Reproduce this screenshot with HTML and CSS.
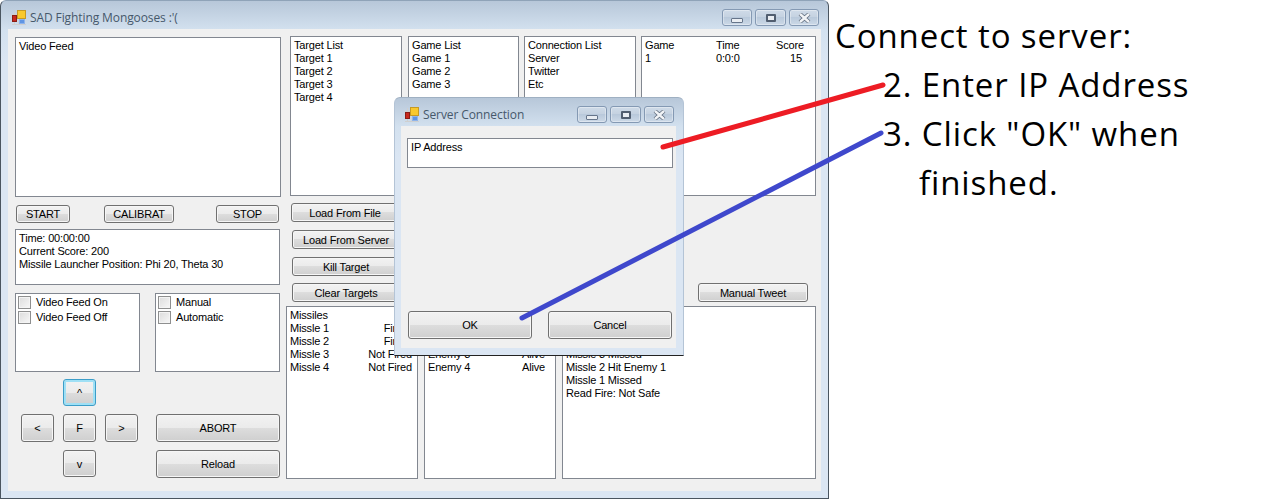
FILE: index.html
```html
<!DOCTYPE html>
<html lang="en">
<head>
    <meta charset="UTF-8">
    <title>SAD Fighting Mongooses</title>
    <link rel="stylesheet" href="styles.css">
</head>
<body>
    <div class="desktop">
        <!-- Main window -->
        <div class="window main-window">
            <div class="titlebar">
                <svg class="app-icon" viewBox="0 0 16 16" width="16" height="16">
                    <path d="M1 4.500h6M1 10h6M1 14.500h14M3.500 1v14M8 10v5M12 10v5" stroke="#cfcfcf" fill="none"/>
                    <rect x="1.500" y="5.500" width="4" height="6" fill="#c8281e" stroke="#8a1e16"/>
                    <rect x="6.500" y="0.500" width="8" height="8" fill="#f9c92e" stroke="#c69a24"/>
                    <rect x="8.500" y="9.500" width="5" height="4" fill="#5f95e4" stroke="#8fb4ea"/>
                </svg>
                <span class="title-text">SAD Fighting Mongooses :'(</span>
                <div class="win-buttons">
                    <div class="win-btn"><span class="glyph-min"></span></div>
                    <div class="win-btn"><span class="glyph-max"></span></div>
                    <div class="win-btn">
                        <svg class="glyph-close" viewBox="0 0 13 10" width="13" height="10">
                            <path d="M2 1l9 8M11 1l-9 8" stroke="#5f6c7d" stroke-width="4" fill="none"/>
                            <path d="M2 1l9 8M11 1l-9 8" stroke="#f1f3f6" stroke-width="2.400" fill="none"/>
                        </svg>
                    </div>
                </div>
            </div>
            <div class="client">
                <div class="left-col">
                    <div class="box video-box">Video Feed</div>
                    <div class="control-row">
                        <button class="btn start-btn">START</button>
                        <button class="btn calibrate-btn">CALIBRAT</button>
                        <button class="btn stop-btn">STOP</button>
                    </div>
                    <div class="box status-box">
                        <div>Time: 00:00:00</div>
                        <div>Current Score: 200</div>
                        <div>Missile Launcher Position: Phi 20, Theta 30</div>
                    </div>
                    <div class="check-row">
                        <div class="box check-box">
                            <label class="check"><span class="tick"></span>Video Feed On</label>
                            <label class="check"><span class="tick"></span>Video Feed Off</label>
                        </div>
                        <div class="box check-box">
                            <label class="check"><span class="tick"></span>Manual</label>
                            <label class="check"><span class="tick"></span>Automatic</label>
                        </div>
                    </div>
                    <div class="pad-row">
                        <div class="pad">
                            <button class="btn pad-btn focused pad-up">^</button>
                            <button class="btn pad-btn pad-left">&lt;</button>
                            <button class="btn pad-btn pad-fire">F</button>
                            <button class="btn pad-btn pad-right">&gt;</button>
                            <button class="btn pad-btn pad-down">v</button>
                        </div>
                        <div class="big-btns">
                            <button class="btn big-btn">ABORT</button>
                            <button class="btn big-btn">Reload</button>
                        </div>
                    </div>
                </div>

                <div class="right-col">
                    <div class="list-row">
                        <div class="box target-list">
                            <div>Target List</div>
                            <div>Target 1</div>
                            <div>Target 2</div>
                            <div>Target 3</div>
                            <div>Target 4</div>
                        </div>
                        <div class="box game-list">
                            <div>Game List</div>
                            <div>Game 1</div>
                            <div>Game 2</div>
                            <div>Game 3</div>
                        </div>
                        <div class="box conn-list">
                            <div>Connection List</div>
                            <div>Server</div>
                            <div>Twitter</div>
                            <div>Etc</div>
                        </div>
                        <div class="box score-list">
                            <div class="score-row"><span>Game</span><span>Time</span><span class="num">Score</span></div>
                            <div class="score-row"><span>1</span><span>0:0:0</span><span class="num">15</span></div>
                        </div>
                    </div>
                    <div class="action-row">
                        <div class="action-btns">
                            <button class="btn action-btn first">Load From File</button>
                            <button class="btn action-btn">Load From Server</button>
                            <button class="btn action-btn">Kill Target</button>
                            <button class="btn action-btn last">Clear Targets</button>
                        </div>
                        <button class="btn tweet-btn">Manual Tweet</button>
                    </div>
                    <div class="bottom-row">
                        <div class="box missile-list">
                            <div>Missiles</div>
                            <div class="pair"><span>Missle 1</span><span class="fired">Fired</span></div>
                            <div class="pair"><span>Missle 2</span><span class="fired">Fired</span></div>
                            <div class="pair"><span>Missle 3</span><span>Not Fired</span></div>
                            <div class="pair"><span>Missle 4</span><span>Not Fired</span></div>
                        </div>
                        <div class="box enemy-list">
                            <div class="pair"><span>Enemy 3</span><span>Alive</span></div>
                            <div class="pair"><span>Enemy 4</span><span>Alive</span></div>
                        </div>
                        <div class="box log-list">
                            <div>Missle 3 Missed</div>
                            <div>Missle 2 Hit Enemy 1</div>
                            <div>Missle 1 Missed</div>
                            <div>Read Fire: Not Safe</div>
                        </div>
                    </div>
                </div>
            </div>
        </div>

        <!-- Dialog on top of the main window -->
        <div class="window dialog">
            <div class="titlebar">
                <svg class="app-icon" viewBox="0 0 16 16" width="16" height="16">
                    <path d="M1 4.500h6M1 10h6M1 14.500h14M3.500 1v14M8 10v5M12 10v5" stroke="#cfcfcf" fill="none"/>
                    <rect x="1.500" y="5.500" width="4" height="6" fill="#c8281e" stroke="#8a1e16"/>
                    <rect x="6.500" y="0.500" width="8" height="8" fill="#f9c92e" stroke="#c69a24"/>
                    <rect x="8.500" y="9.500" width="5" height="4" fill="#5f95e4" stroke="#8fb4ea"/>
                </svg>
                <span class="title-text">Server Connection</span>
                <div class="win-buttons">
                    <div class="win-btn"><span class="glyph-min"></span></div>
                    <div class="win-btn"><span class="glyph-max"></span></div>
                    <div class="win-btn">
                        <svg class="glyph-close" viewBox="0 0 13 10" width="13" height="10">
                            <path d="M2 1l9 8M11 1l-9 8" stroke="#5f6c7d" stroke-width="4" fill="none"/>
                            <path d="M2 1l9 8M11 1l-9 8" stroke="#f1f3f6" stroke-width="2.400" fill="none"/>
                        </svg>
                    </div>
                </div>
            </div>
            <div class="client dialog-client">
                <div class="box ip-box">IP Address</div>
                <div class="dialog-btns">
                    <button class="btn big-btn">OK</button>
                    <button class="btn big-btn">Cancel</button>
                </div>
            </div>
        </div>

        <!-- Hand drawn annotation lines -->
        <svg class="annotation-lines" width="1262" height="500" viewBox="0 0 1262 500">
            <line x1="663" y1="147" x2="883" y2="85" stroke="#ed1c24" stroke-width="5" stroke-linecap="round"/>
            <line x1="522" y1="318" x2="881" y2="133" stroke="#3f48cc" stroke-width="5" stroke-linecap="round"/>
        </svg>

        <div class="notes">
            <div>Connect to server:</div>
            <div class="step">2. Enter IP Address</div>
            <div class="step">3. Click "OK" when</div>
            <div class="step-cont">finished.</div>
        </div>
    </div>
</body>
</html>
```

FILE: styles.css
```css
/* WinForms style windows on a white desktop */
* {
    box-sizing: border-box;
}

body {
    margin: 0;
    background: #fff;
}

.desktop {
    position: relative;
    width: 1262px;
    height: 500px;
    overflow: hidden;
    font-family: "Liberation Sans", Arial, sans-serif;
    font-size: 11px;
    letter-spacing: -0.17px;
    line-height: 13px;
    color: #000;
}

.window {
    position: absolute;
    display: flex;
    flex-direction: column;
    padding: 0 7px 7px;
    background: linear-gradient(#b7c7d9 0, #d3e1ef 29px, #dbe6f3 60px);
    border: 1px solid #4a5560;
    border-top-color: #8fa3b8;
    border-radius: 6px 6px 0 0;
}

.main-window {
    left: 0;
    top: 0;
    width: 829px;
    height: 499px;
}

.dialog {
    left: 394px;
    top: 97px;
    width: 290px;
    height: 259px;
    padding-left: 6px;
    border-color: #9fb0c2 #b4c4d6 #222;
}

.titlebar {
    display: flex;
    align-items: center;
    height: 28px;
    flex: none;
}

.app-icon {
    margin: 6px 3px 0 3px;
    flex: none;
}

.title-text {
    font-family: "Open Sans", sans-serif;
    font-size: 12px;
    letter-spacing: -0.1px;
    color: #46586b;
    margin-top: 4px;
}

.win-buttons {
    display: flex;
    gap: 3px;
    margin-left: auto;
    margin-top: 5px;
    margin-right: 2px;
}

.win-btn {
    display: flex;
    align-items: center;
    justify-content: center;
    width: 30px;
    height: 17px;
    border: 1px solid #8499b3;
    border-radius: 3px;
    background: linear-gradient(#cfdbe8, #c4d1e0 50%, #b9c9db 50%, #ccd9e7);
    box-shadow: inset 0 0 0 1px rgba(255, 255, 255, 0.35);
}

.win-btn:nth-child(2) {
    width: 31px;
}

.glyph-min {
    display: block;
    width: 12px;
    height: 5px;
    margin-top: 5px;
    background: #e9edf2;
    border: 1px solid #66758a;
    border-radius: 1px;
}

.glyph-max {
    display: block;
    width: 10px;
    height: 8px;
    background: #e9edf2;
    border: 2px solid #515e70;
    border-radius: 1px;
}

.glyph-close {
    display: block;
}

.client {
    flex: 1;
    display: flex;
    background: #f0f0f0;
    padding: 8px 0 0 7px;
}

.box {
    background: #fff;
    border: 1px solid #828790;
    padding: 2px 3px;
}

.btn {
    display: block;
    padding: 0;
    font-family: inherit;
    font-size: 11px;
    letter-spacing: -0.17px;
    color: #000;
    border: 1px solid #707070;
    border-radius: 3px;
    background: linear-gradient(#f2f2f2, #ebebeb 50%, #dddddd 50%, #cfcfcf);
    box-shadow: inset 0 0 0 1px #f6f6f6;
}

.btn.focused {
    border-color: #3c9dc8;
    box-shadow: inset 0 0 0 2px #9fe0f5;
}

/* left column */
.left-col {
    width: 266px;
    flex: none;
}

.video-box {
    height: 160px;
}

.control-row {
    display: flex;
    margin: 8px 0 0 1px;
    height: 18px;
}

.start-btn {
    width: 54px;
}

.calibrate-btn {
    width: 70px;
    margin-left: 34px;
}

.stop-btn {
    width: 63px;
    margin-left: 42px;
}

.status-box {
    width: 265px;
    height: 56px;
    margin-top: 6px;
}

.check-row {
    display: flex;
    gap: 15px;
    margin-top: 8px;
}

.check-box {
    width: 125px;
    height: 79px;
    padding: 1px 2px;
}

.check {
    display: flex;
    align-items: center;
    height: 15px;
}

.tick {
    width: 13px;
    height: 13px;
    margin-right: 5px;
    background: linear-gradient(135deg, #dcdcdc, #f7f7f7);
    border: 1px solid #8e8f8f;
    box-shadow: inset 0 0 0 1px #f4f4f4;
}

.pad-row {
    display: flex;
    margin-top: 7px;
}

.pad {
    display: grid;
    grid-template-columns: 33px 33px 33px;
    grid-template-rows: 27px 28px 27px;
    column-gap: 9px;
    row-gap: 8px;
    margin-left: 6px;
}

.pad-up {
    grid-column: 2;
    grid-row: 1;
}

.pad-left {
    grid-column: 1;
    grid-row: 2;
}

.pad-fire {
    grid-column: 2;
    grid-row: 2;
}

.pad-right {
    grid-column: 3;
    grid-row: 2;
}

.pad-down {
    grid-column: 2;
    grid-row: 3;
}

.big-btns {
    display: flex;
    flex-direction: column;
    gap: 8px;
    margin: 35px 0 0 18px;
}

.big-btn {
    width: 124px;
    height: 28px;
}

/* right column */
.right-col {
    flex: 1;
    margin-left: 5px;
}

.list-row {
    display: flex;
    margin-top: -1px;
    height: 160px;
}

.target-list {
    width: 112px;
    margin-left: 4px;
}

.game-list {
    width: 111px;
    margin-left: 6px;
}

.conn-list {
    width: 112px;
    margin-left: 5px;
}

.score-list {
    width: 175px;
    margin-left: 5px;
}

.score-row {
    display: grid;
    grid-template-columns: 71px 60px 1fr;
    padding-right: 10px;
}

.num {
    text-align: right;
}

.action-row {
    display: flex;
    justify-content: space-between;
    align-items: flex-end;
    height: 110px;
    padding-bottom: 4px;
}

.action-btns {
    display: flex;
    flex-direction: column;
    gap: 8px;
    margin-left: 6px;
}

.action-btn {
    width: 108px;
    height: 19px;
}

.action-btn.first {
    margin-left: -1px;
}

.action-btn.last {
    margin-top: -1px;
}

.tweet-btn {
    width: 110px;
    height: 19px;
    margin-right: 13px;
}

.bottom-row {
    display: flex;
    gap: 6px;
    height: 173px;
}

.missile-list {
    width: 132px;
}

/* rows above these sit behind the dialog */
.enemy-list {
    width: 132px;
    padding-top: 41px;
}

.log-list {
    width: 254px;
    padding-top: 41px;
}

.pair {
    display: flex;
    justify-content: space-between;
    padding-right: 2px;
}

.fired {
    margin-right: 4px;
}

.enemy-list .pair {
    padding-right: 7px;
}

/* dialog */
.dialog-client {
    flex-direction: column;
    padding: 12px 0 0 6px;
}

.ip-box {
    width: 266px;
    height: 30px;
}

.dialog-btns {
    display: flex;
    gap: 16px;
    margin: 143px 0 0 1px;
}

/* annotations */
.annotation-lines {
    position: absolute;
    left: 0;
    top: 0;
}

.notes {
    position: absolute;
    left: 835px;
    top: 11px;
    font-family: "Open Sans", sans-serif;
    font-size: 33px;
    letter-spacing: 0.9px;
    line-height: 49px;
    color: #000;
    white-space: nowrap;
}

.step {
    margin-left: 48px;
}

.step-cont {
    margin-left: 84px;
}
```
